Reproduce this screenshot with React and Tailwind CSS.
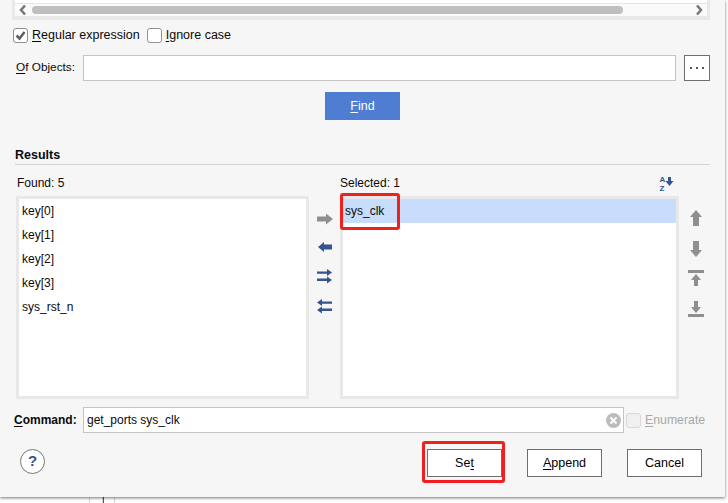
import React from 'react';

const U = ({ children }) => <span className="underline underline-offset-2">{children}</span>;

const ports = ['key[0]', 'key[1]', 'key[2]', 'key[3]', 'sys_rst_n'];

const Arrow = ({ d, color = '#35558f' }) => (
  <svg width="16" height="16" viewBox="0 0 16 16" fill={color} className="block">
    <path d={d} />
  </svg>
);

const Check = ({ checked, disabled }) => (
  <span className={`flex h-[15px] w-[15px] items-center justify-center rounded-[3px] border-[1.5px] ${disabled ? 'border-[#d8d8d8] bg-[#f0f0f0]' : 'border-[#909090] bg-white'}`}>
    {checked && (
      <svg width="11" height="11" viewBox="0 0 11 11" fill="none" stroke="#5f5f5f" strokeWidth="2.500">
        <path d="M1.500 5.500l3 3 5-6.500" />
      </svg>
    )}
  </span>
);

const DialogButton = ({ children }) => (
  <button className="h-[28px] w-[75px] border border-[#6e6e6e] bg-white text-[12.5px] text-black">{children}</button>
);

export default function App() {
  return (
    <div className="flex h-[503px] w-[728px] flex-col overflow-hidden bg-white font-['Liberation_Sans',Arial,sans-serif] text-[12px] text-[#0a0a0a]">
      <div className="relative flex h-[497px] w-[725px] flex-none flex-col bg-[#f6f6f6] shadow-[0_1px_3px_rgba(0,0,0,0.55)]">
        {/* horizontal scroll pane */}
        <div className="ml-3 h-[20px] w-[698px] border-x-[3px] border-b-[4px] border-[#e8e8e8] bg-[#fafafa]">
          <div className="h-[3px] bg-white" />
          <div className="h-px bg-[#e6e6e6]" />
          <div className="flex h-[12px] items-center">
            <svg width="17" height="12" viewBox="0 0 17 12" fill="none" stroke="#777" strokeWidth="2.500" className="flex-none">
              <path d="M10 1.500L6 6l4 4.500" />
            </svg>
            <div className="h-[8px] w-[591px] flex-none rounded-full bg-[#bfbfbf]" />
            <svg width="12" height="12" viewBox="0 0 12 12" fill="none" stroke="#777" strokeWidth="2.500" className="ml-auto mr-[2px] flex-none">
              <path d="M4 1.500L8 6l-4 4.500" />
            </svg>
          </div>
        </div>

        {/* match options */}
        <div className="mt-[8px] flex h-[14px] items-center pl-[13px] text-[12.5px]">
          <Check checked />
          <span className="ml-[4px]"><U>R</U>egular expression</span>
          <span className="ml-[7px]"><Check /></span>
          <span className="ml-[4px]"><U>I</U>gnore case</span>
        </div>

        {/* of objects */}
        <div className="mt-[13px] flex h-[26px] items-center pl-[16px]">
          <span className="w-[67px] text-[11.8px]"><U>O</U>f Objects:</span>
          <div className="h-full w-[593px] border border-[#c4c4c4] bg-white" />
          <div className="ml-2 flex h-full w-[26px] items-center justify-center border border-[#6e6e6e] bg-white">
            <svg width="14" height="4" viewBox="0 0 14 4" fill="#555">
              <rect x="0" y="1" width="2" height="2" />
              <rect x="6" y="1" width="2" height="2" />
              <rect x="12" y="1" width="2" height="2" />
            </svg>
          </div>
        </div>

        {/* find */}
        <button className="ml-[325px] mt-[11px] h-[28px] w-[75px] bg-[#4f7dd2] text-[12.5px] text-white"><U>F</U>ind</button>

        {/* results */}
        <div className="ml-[15px] mt-[28px] h-[17px] w-[695px] border-b border-[#d4d4d4] text-[12.5px] font-bold leading-[14px]">Results</div>

        <div className="mt-[10px] flex h-[16px] items-center">
          <span className="ml-[17px] w-[323px]">Found: 5</span>
          <span className="w-[319px]">Selected: 1</span>
          <svg width="15" height="20" viewBox="0 0 15 20" fill="#35558f">
            <text x="0.500" y="9" fontSize="8" fontWeight="700" fontFamily="Liberation Sans">A</text>
            <text x="0.500" y="18" fontSize="8" fontWeight="700" fontFamily="Liberation Sans">Z</text>
            <path d="M9 4h3v4h2.500l-4 5-4-5H9z" />
          </svg>
        </div>

        {/* lists */}
        <div className="mt-[5px] flex h-[203px]">
          <div className="ml-[16px] w-[293px] border-[3px] border-[#e8e8e8] bg-white">
            {ports.map((p) => (
              <div key={p} className="flex h-[24px] items-center pl-[3px]">{p}</div>
            ))}
          </div>

          <div className="flex w-[31px] flex-col items-center pt-[15px]">
            <Arrow color="#8f8f8f" d="M0 5.500h9V2.500l7 5.500-7 5.500v-3H0z" />
            <div className="mt-3"><Arrow d="M15 5.500H7V3L1 8l6 5v-2.500h8z" /></div>
            <div className="mt-[14px]"><Arrow d="M0 2.500h10V0l5 3.500L10 7V4.800H0zM0 9.500h10V7.500l5 3.500-5 3.500V12H0z" /></div>
            <div className="mt-[14px]"><Arrow d="M15 2.500H5V0L0 3.500 5 7V4.800h10zM15 9.500H5V7.500L0 11l5 3.500V12h10z" /></div>
          </div>

          <div className="w-[339px] border-[3px] border-[#e8e8e8] bg-white">
            <div className="flex h-[24px] items-center bg-[#c8dcfb] pl-[2px]">sys_clk</div>
          </div>

          <div className="ml-[9px] flex flex-col pt-[14px]">
            <Arrow color="#8f8f8f" d="M8 0l6 7h-3v9H5V7H2z" />
            <div className="mt-[15px]"><Arrow color="#8f8f8f" d="M8 16l6-7h-3V0H5v9H2z" /></div>
            <div className="mt-[13px]"><Arrow color="#8f8f8f" d="M0 0h16v3H0zM8 4l5 6h-3v6H6v-6H3z" /></div>
            <div className="mt-[15px]"><Arrow color="#8f8f8f" d="M0 13h16v3H0zM8 12l5-6h-3V0H6v6H3z" /></div>
          </div>
        </div>

        {/* command */}
        <div className="mt-[8px] flex h-[26px] items-center pl-[14px]">
          <span className="w-[69px] font-bold"><U>C</U>ommand:</span>
          <div className="flex h-full w-[541px] items-center justify-between border border-[#c4c4c4] bg-white pl-[3px] pr-[2px]">
            <span>get_ports sys_clk</span>
            <svg width="15" height="15" viewBox="0 0 15 15">
              <circle cx="7.500" cy="7.500" r="7.500" fill="#bcbcbc" />
              <path d="M4.500 4.500l6 6M10.500 4.500l-6 6" stroke="#fff" strokeWidth="2" />
            </svg>
          </div>
          <span className="ml-[2px]"><Check disabled /></span>
          <span className="ml-[4px] text-[12.3px] text-[#a8a8a8]"><U>E</U>numerate</span>
        </div>

        {/* footer */}
        <div className="mt-[16px] flex h-[28px] items-start pl-[20px]">
          <div className="flex h-[25px] w-[25px] items-center justify-center rounded-full border border-[#777] bg-white text-[15px] font-bold text-[#35558f]">?</div>
          <div className="ml-[382px]"><DialogButton>Se<U>t</U></DialogButton></div>
          <div className="ml-[25px]"><DialogButton><U>A</U>ppend</DialogButton></div>
          <div className="ml-[25px]"><DialogButton>Cancel</DialogButton></div>
        </div>

        {/* red annotation boxes */}
        <div className="absolute left-[340px] top-[193px] h-[37px] w-[60px] rounded-[3px] border-[3px] border-[#f0201c]" />
        <div className="absolute left-[422px] top-[441px] h-[42px] w-[83px] rounded-[3px] border-[3px] border-[#f0201c]" />
      </div>

      {/* window behind the dialog */}
      <div className="flex h-[6px] pl-[89px]">
        <div className="w-[14px] border-x border-[#d8d8d8]" />
        <div className="w-px bg-[#555]" />
        <div className="ml-[10px] w-px bg-[#d8d8d8]" />
      </div>
    </div>
  );
}
